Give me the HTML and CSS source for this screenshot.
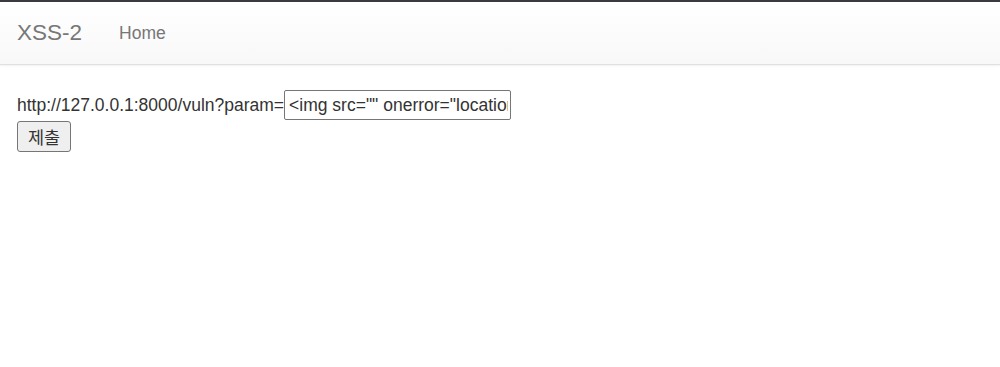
FILE: index.html
```html
<!DOCTYPE html>
<html lang="ko">
<head>
<meta charset="utf-8">
<title>XSS-2</title>
<link rel="stylesheet" href="styles.css">
</head>
<body>
<nav class="navbar">
  <a class="brand" href="#">XSS-2</a>
  <a class="nav-link" href="#">Home</a>
</nav>
<main class="content">
  <form class="form">
    <div class="row"><span class="label">http://127.0.0.1:8000/vuln?param=</span><input class="field" type="text" value="&lt;img src=&quot;&quot; onerror=&quot;location.href='http://127.0.0.1:8000/'"></div>
    <button class="submit" type="button">제출</button>
  </form>
</main>
</body>
</html>
```
FILE: styles.css
```css
html, body {
  margin: 0;
  padding: 0;
  background: #fff;
}
body {
  font-family: "Liberation Sans", Arial, "Noto Sans CJK KR", sans-serif;
  font-size: 17.5px;
  color: #333;
  border-top: 2px solid #3b3b3f;
}
.navbar {
  display: flex;
  align-items: center;
  height: 62px;
  padding: 0 18px 0 17px;
  background: linear-gradient(to bottom, #ffffff 0%, #f8f8f8 100%);
  border-bottom: 1px solid #e0e0e0;
  box-shadow: 0 1px 2px rgba(0, 0, 0, 0.06);
}
.brand {
  font-size: 22.5px;
  color: #777;
  text-decoration: none;
  margin-right: 37px;
}
.nav-link {
  font-size: 17.5px;
  color: #777;
  text-decoration: none;
}
.content {
  padding: 25px 17px 0 17px;
}
.row {
  display: flex;
  align-items: center;
}
.label {
  white-space: nowrap;
}
.field {
  box-sizing: border-box;
  width: 227px;
  height: 30px;
  margin: 0;
  padding: 0 2px 0 4px;
  border: 1px solid #767676;
  border-radius: 2px;
  font-family: "Liberation Sans", Arial, sans-serif;
  font-size: 17.5px;
  color: #333;
  background: #fff;
}
.submit {
  box-sizing: border-box;
  display: block;
  margin-top: 1px;
  width: 54px;
  height: 31px;
  padding: 0 6px;
  border: 1px solid #767676;
  border-radius: 3px;
  background: #efefef;
  font-family: "Noto Sans CJK KR", sans-serif;
  font-size: 17.5px;
  color: #333;
}
```
